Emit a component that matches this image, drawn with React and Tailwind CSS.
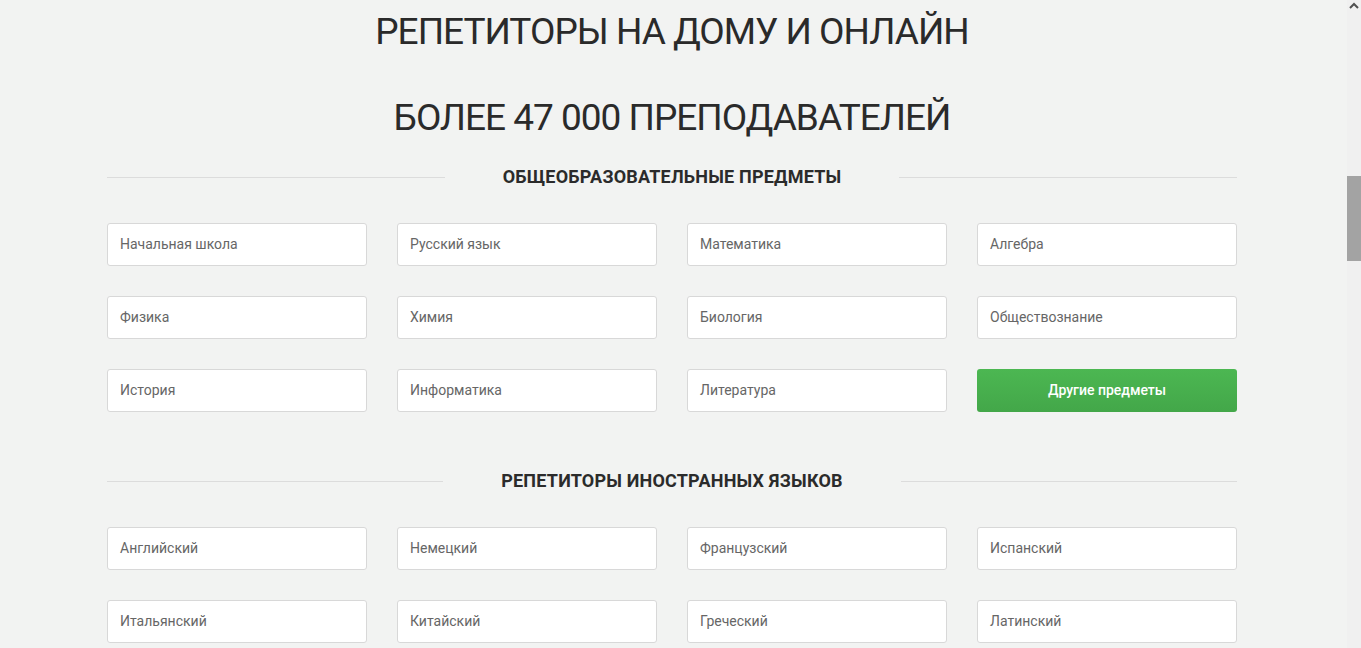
const school = [
    "Начальная школа", "Русский язык", "Математика", "Алгебра",
    "Физика", "Химия", "Биология", "Обществознание",
    "История", "Информатика", "Литература",
];

const languages = [
    "Английский", "Немецкий", "Французский", "Испанский",
    "Итальянский", "Китайский", "Греческий", "Латинский",
];

const SectionTitle = ({ title }) => {
    return (
        <div className="flex items-center gap-[58px]">
            <div className="flex-1 h-px bg-[#dcdcdc]"></div>
            <h2 className="text-[18px] font-bold text-[#2b2b2b] tracking-[0.2px] leading-none">{title}</h2>
            <div className="flex-1 h-px bg-[#dcdcdc]"></div>
        </div>
    )
}

const SubjectCard = ({ name }) => {
    return (
        <a href="#" className="h-[43px] flex items-center px-[12px] bg-white border border-[#d8d8d8] rounded-[3px] text-[14px] text-[#666]">
            {name}
        </a>
    )
}

const App = () => {
    return (
        <div className="flex h-[648px] overflow-hidden bg-[#f2f3f2]" style={{ fontFamily: "Roboto, 'Noto Sans', sans-serif" }}>
            <div className="flex-1">
                <div className="w-[1130px] ml-[107px]">
                    <h1 className="text-center text-[37px] tracking-[-1px] leading-none text-[#2a2a2a] pt-[13px]">РЕПЕТИТОРЫ НА ДОМУ И ОНЛАЙН</h1>
                    <h1 className="text-center text-[37px] tracking-[-1px] leading-none text-[#2a2a2a] mt-[49px]">БОЛЕЕ 47 000 ПРЕПОДАВАТЕЛЕЙ</h1>

                    <div className="mt-[32px]">
                        <SectionTitle title="ОБЩЕОБРАЗОВАТЕЛЬНЫЕ ПРЕДМЕТЫ" />
                    </div>
                    <div className="grid grid-cols-4 gap-[30px] mt-[37px]">
                        {school.map((s, index) => (
                            <SubjectCard name={s} key={index} />
                        ))}
                        <button className="h-[43px] rounded-[3px] bg-gradient-to-b from-[#4cb752] to-[#43a749] text-white text-[14px] font-medium">
                            Другие предметы
                        </button>
                    </div>

                    <div className="mt-[60px]">
                        <SectionTitle title="РЕПЕТИТОРЫ ИНОСТРАННЫХ ЯЗЫКОВ" />
                    </div>
                    <div className="grid grid-cols-4 gap-[30px] mt-[37px]">
                        {languages.map((s, index) => (
                            <SubjectCard name={s} key={index} />
                        ))}
                    </div>
                </div>
            </div>
            <div className="w-[14px] bg-[#f0f0f0] flex flex-col items-center">
                <svg width="10" height="8" viewBox="0 0 10 8" className="mt-[2px]">
                    <path d="M1 6 L5 2 L9 6" stroke="#505050" strokeWidth="2" fill="none" />
                </svg>
                <div className="w-full h-[85px] bg-[#a3a3a3] mt-[166px]"></div>
            </div>
        </div>
    )
}

export default App
